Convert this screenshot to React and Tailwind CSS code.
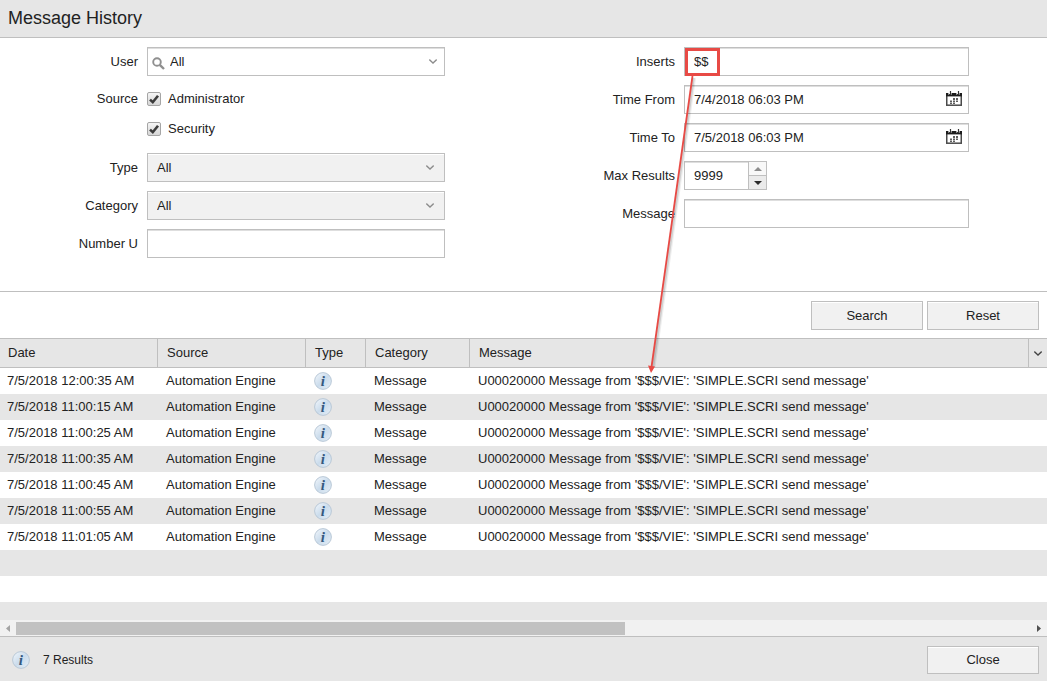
import { useState } from 'react';

const times = ['12:00:35', '11:00:15', '11:00:25', '11:00:35', '11:00:45', '11:00:55', '11:01:05'];

const rows = times.map((time) => ({
  id: time,
  date: `7/5/2018 ${time} AM`,
  source: 'Automation Engine',
  category: 'Message',
  message: "U00020000 Message from '$$$/VIE': 'SIMPLE.SCRI send message'",
}));

const emptyRows = [0, 1, 2];

const fieldClass =
  'h-[29px] w-full border border-[#bfbfbf] bg-white px-[9px] shadow-[inset_0_1px_0_#dedede] outline-none';
const labelClass = 'shrink-0 text-right';
const buttonClass =
  'w-28 border border-[#bfbfbf] bg-[#f1f1f1] text-center shadow-[inset_0_1px_0_#ffffff] hover:bg-[#e9e9e9]';

function Chevron({ className }) {
  return (
    <svg viewBox="0 0 8 5" className={`h-[5px] w-2 ${className}`} fill="none" stroke="currentColor" strokeWidth="1.3">
      <path d="M0.3 0.6 L4 4 L7.7 0.6" />
    </svg>
  );
}

function InfoIcon() {
  return (
    <svg viewBox="0 0 18 18" className="block size-[18px]" aria-hidden="true">
      <defs>
        <linearGradient id="info" x1="0" y1="0" x2="1" y2="1">
          <stop offset="0" stopColor="#f4f8fc" />
          <stop offset="0.5" stopColor="#cbdcec" />
          <stop offset="1" stopColor="#e6eff7" />
        </linearGradient>
      </defs>
      <circle cx="9" cy="9" r="8.4" fill="url(#info)" stroke="#b4c4d4" strokeWidth="0.9" />
      <text
        x="8.8"
        y="14"
        textAnchor="middle"
        fill="#34587f"
        className="font-['Liberation_Serif',serif] text-[15px] font-bold italic"
      >
        i
      </text>
    </svg>
  );
}

function CalendarIcon() {
  return (
    <svg viewBox="0 0 16 15" className="block h-[15px] w-4" aria-hidden="true">
      <rect x="0.75" y="3" width="14.5" height="11.2" fill="#fff" stroke="#4a4a4a" strokeWidth="1.5" />
      <rect x="0" y="2" width="16" height="3.4" fill="#1c1c1c" />
      <path d="M2.4 0h3.2v3.8H2.4zM10.4 0h3.2v3.8h-3.2z" fill="#fff" />
      <path d="M4.5 0v3.5H3M12.5 0v3.5H11" fill="none" stroke="#333" strokeWidth="1.2" />
      <path
        d="M7 7h2v2H7zM10 7h2v2h-2zM4 9.4h2v1.6H4zM7 9.4h2v1.6H7zM10 9.4h2v1.6h-2zM4 11.4h2V13H4zM7 11.4h2V13H7z"
        fill="#5e5e5e"
      />
    </svg>
  );
}

function Row({ id, label, labelWidth, children }) {
  return (
    <div className="flex items-center gap-[9px]">
      <label htmlFor={id} className={`${labelClass} ${labelWidth}`}>
        {label}
      </label>
      <div className="relative min-w-0 flex-1">{children}</div>
    </div>
  );
}

function SelectField({ id, label }) {
  return (
    <Row id={id} label={label} labelWidth="w-[138px]">
      <select
        id={id}
        className="block h-[29px] w-full appearance-none border border-[#bfbfbf] bg-[#f1f1f1] px-[9px] shadow-[inset_0_1px_0_#ffffff] outline-none"
      >
        <option>All</option>
      </select>
      <Chevron className="pointer-events-none absolute right-[11px] top-3 text-[#8c8c8c]" />
    </Row>
  );
}

function DateField({ id, label, value }) {
  return (
    <Row id={id} label={label} labelWidth="w-[230px]">
      <input id={id} type="text" defaultValue={value} className={`${fieldClass} block`} />
      <button type="button" aria-label={`Pick ${label}`} className="absolute right-[7px] top-[6px]">
        <CalendarIcon />
      </button>
    </Row>
  );
}

function CheckItem({ label, checked, onChange }) {
  return (
    <label className="flex h-[27px] items-center gap-[7px]">
      <span className="relative block size-[14px]">
        <input
          type="checkbox"
          checked={checked}
          onChange={onChange}
          className="block size-[14px] appearance-none rounded-xs border border-[#a5a5a5] bg-linear-to-b from-[#f5f5f5] to-[#d6d6d6]"
        />
        {checked && (
          <svg viewBox="0 0 14 14" className="pointer-events-none absolute inset-0" fill="none">
            <path d="M3 7.6 L5.8 10.2 L11 3.8" stroke="#3c3c3c" strokeWidth="2.6" />
          </svg>
        )}
      </span>
      {label}
    </label>
  );
}

// Red frame round the search term, with an arrow down to the first hit
function Callout() {
  return (
    <svg
      viewBox="0 0 90 330"
      className="pointer-events-none absolute left-[-43px] top-0 z-10 h-[330px] w-[90px]"
      aria-hidden="true"
    >
      <path d="M53 31 L12.5 320" stroke="#000" strokeOpacity="0.07" strokeWidth="4" />
      <path d="M52.5 31 L12 320" stroke="#000" strokeOpacity="0.12" strokeWidth="2.5" />
      <rect x="45.5" y="2.5" width="32" height="25" fill="none" stroke="#e84a45" strokeWidth="3" />
      <path d="M51.5 29 L10.5 320" stroke="#e84a45" strokeWidth="1.8" />
      <path d="M7 318.5 L14 319.5 L10 326 Z" fill="#e84a45" />
    </svg>
  );
}

function HeadCell({ children }) {
  return (
    <th className="border-y border-l border-[#bfbfbf] pl-[9px] text-left font-normal first:border-l-0 first:pl-2">
      {children}
    </th>
  );
}

export default function App() {
  const [sources, setSources] = useState({ Administrator: true, Security: true });
  const [max, setMax] = useState(9999);

  const toggle = (name) => setSources((s) => ({ ...s, [name]: !s[name] }));

  return (
    <div className="flex h-screen flex-col bg-white font-['Liberation_Sans',Arial,sans-serif] text-[13px] leading-4 text-[#222222]">
      <header className="flex h-[38px] shrink-0 items-center border-b border-[#bfbfbf] bg-[#e6e6e6] px-2 pb-0.5">
        <h1 className="text-[18px] leading-5">Message History</h1>
      </header>

      <form onSubmit={(e) => e.preventDefault()} className="shrink-0">
        <div className="grid grid-cols-[445fr_602fr] border-b border-[#bfbfbf] pb-[33px] pt-[9px]">
          <div className="flex flex-col gap-[9px]">
            <Row id="user" label="User" labelWidth="w-[138px]">
              <select id="user" className={`${fieldClass} block appearance-none pl-[22px]`}>
                <option>All</option>
              </select>
              <svg
                viewBox="0 0 13 13"
                className="pointer-events-none absolute left-[5px] top-[10px] size-[13px]"
                fill="none"
                stroke="#8f8f8f"
              >
                <circle cx="5" cy="5" r="3.8" strokeWidth="1.9" />
                <path d="M7.8 7.8 L12 12" strokeWidth="2.4" />
              </svg>
              <Chevron className="pointer-events-none absolute right-2 top-3 text-[#8c8c8c]" />
            </Row>

            <div role="group" aria-labelledby="source" className="flex gap-[9px] pb-[2px]">
              <span id="source" className="w-[138px] shrink-0 text-right leading-[27px]">
                Source
              </span>
              <div className="flex flex-col gap-[3px]">
                {Object.keys(sources).map((name) => (
                  <CheckItem key={name} label={name} checked={sources[name]} onChange={() => toggle(name)} />
                ))}
              </div>
            </div>

            <SelectField id="type" label="Type" />
            <SelectField id="category" label="Category" />
            <Row id="number" label="Number U" labelWidth="w-[138px]">
              <input id="number" type="text" className={`${fieldClass} block`} />
            </Row>
          </div>

          <div className="flex flex-col gap-[9px] pr-[78px]">
            <Row id="inserts" label="Inserts" labelWidth="w-[230px]">
              <input id="inserts" type="text" defaultValue="$$" className={`${fieldClass} block`} />
              <Callout />
            </Row>
            <DateField id="from" label="Time From" value="7/4/2018 06:03 PM" />
            <DateField id="to" label="Time To" value="7/5/2018 06:03 PM" />
            <Row id="max" label="Max Results" labelWidth="w-[230px]">
              <div className="flex h-[29px] w-[83px] border border-[#bfbfbf] shadow-[inset_0_1px_0_#dedede]">
                <input
                  id="max"
                  type="text"
                  value={max}
                  onChange={(e) => setMax(Number(e.target.value) || 0)}
                  className="min-w-0 flex-1 pl-[9px] outline-none"
                />
                <div className="flex w-[18px] flex-col border-l border-[#bfbfbf]">
                  <button
                    type="button"
                    aria-label="Increase"
                    onClick={() => setMax(max + 1)}
                    className="flex flex-1 items-center justify-center border-b border-[#bfbfbf] bg-[#f8f8f8]"
                  >
                    <svg viewBox="0 0 8 4" className="h-1 w-2" fill="#8c8c8c">
                      <path d="M0 4 L4 0 L8 4Z" />
                    </svg>
                  </button>
                  <button
                    type="button"
                    aria-label="Decrease"
                    onClick={() => setMax(max - 1)}
                    className="flex flex-1 items-center justify-center bg-[#ebebeb]"
                  >
                    <svg viewBox="0 0 8 4" className="h-1 w-2" fill="#2b2b2b">
                      <path d="M0 0 L4 4 L8 0Z" />
                    </svg>
                  </button>
                </div>
              </div>
            </Row>
            <Row id="message" label="Message" labelWidth="w-[230px]">
              <input id="message" type="text" className={`${fieldClass} block`} />
            </Row>
          </div>
        </div>

        <div className="flex justify-end gap-1 px-2 pb-2 pt-[9px]">
          <button type="submit" className={`${buttonClass} h-[29px]`}>
            Search
          </button>
          <button type="reset" className={`${buttonClass} h-[29px]`}>
            Reset
          </button>
        </div>
      </form>

      <div className="min-h-0 flex-1 overflow-hidden">
        <table className="w-full table-fixed border-separate border-spacing-0">
          <colgroup>
            <col className="w-[157px]" />
            <col className="w-[148px]" />
            <col className="w-[60px]" />
            <col className="w-[104px]" />
            <col />
            <col className="w-[19px]" />
          </colgroup>
          <thead>
            <tr className="h-[30px] bg-[#e6e6e6]">
              <HeadCell>Date</HeadCell>
              <HeadCell>Source</HeadCell>
              <HeadCell>Type</HeadCell>
              <HeadCell>Category</HeadCell>
              <HeadCell>Message</HeadCell>
              <th className="border border-r-0 border-[#bfbfbf] p-0">
                <button type="button" aria-label="Columns" className="flex h-7 w-full items-center justify-center">
                  <Chevron className="text-[#444444]" />
                </button>
              </th>
            </tr>
          </thead>
          <tbody>
            {rows.map((row) => (
              <tr key={row.id} className="h-[26px] even:bg-[#e6e6e6]">
                <td className="p-0 pl-[7px]">{row.date}</td>
                <td className="p-0 pl-[9px]">{row.source}</td>
                <td className="p-0 pl-[9px]">
                  <InfoIcon />
                </td>
                <td className="p-0 pl-[9px]">{row.category}</td>
                <td colSpan={2} className="p-0 pl-[9px]">
                  {row.message}
                </td>
              </tr>
            ))}
            {emptyRows.map((n) => (
              <tr key={n} className="h-[26px] even:bg-[#e6e6e6]">
                <td colSpan={6} className="p-0" />
              </tr>
            ))}
          </tbody>
        </table>
      </div>

      {/* horizontal scroll bar */}
      <div className="flex h-4 shrink-0 items-center bg-[#f1f1f1] pt-px">
        <button type="button" aria-label="Scroll left" className="flex w-4 justify-center">
          <svg viewBox="0 0 4 7" className="h-[7px] w-1" fill="#a3a3a3">
            <path d="M4 0 L0 3.5 L4 7Z" />
          </svg>
        </button>
        <div className="flex-1">
          <div className="h-[13px] w-[60%] bg-[#c1c1c1]" />
        </div>
        <button type="button" aria-label="Scroll right" className="flex w-4 justify-center">
          <svg viewBox="0 0 4 7" className="h-[7px] w-1" fill="#505050">
            <path d="M0 0 L4 3.5 L0 7Z" />
          </svg>
        </button>
      </div>

      <footer className="flex h-[45px] shrink-0 items-center border-t border-[#bfbfbf] bg-[#e6e6e6] pl-3 pr-2 pt-0.5">
        <InfoIcon />
        <span className="pl-[13px] text-[12px]">7 Results</span>
        <button type="button" className={`${buttonClass} ml-auto h-7`}>
          Close
        </button>
      </footer>
    </div>
  );
}
